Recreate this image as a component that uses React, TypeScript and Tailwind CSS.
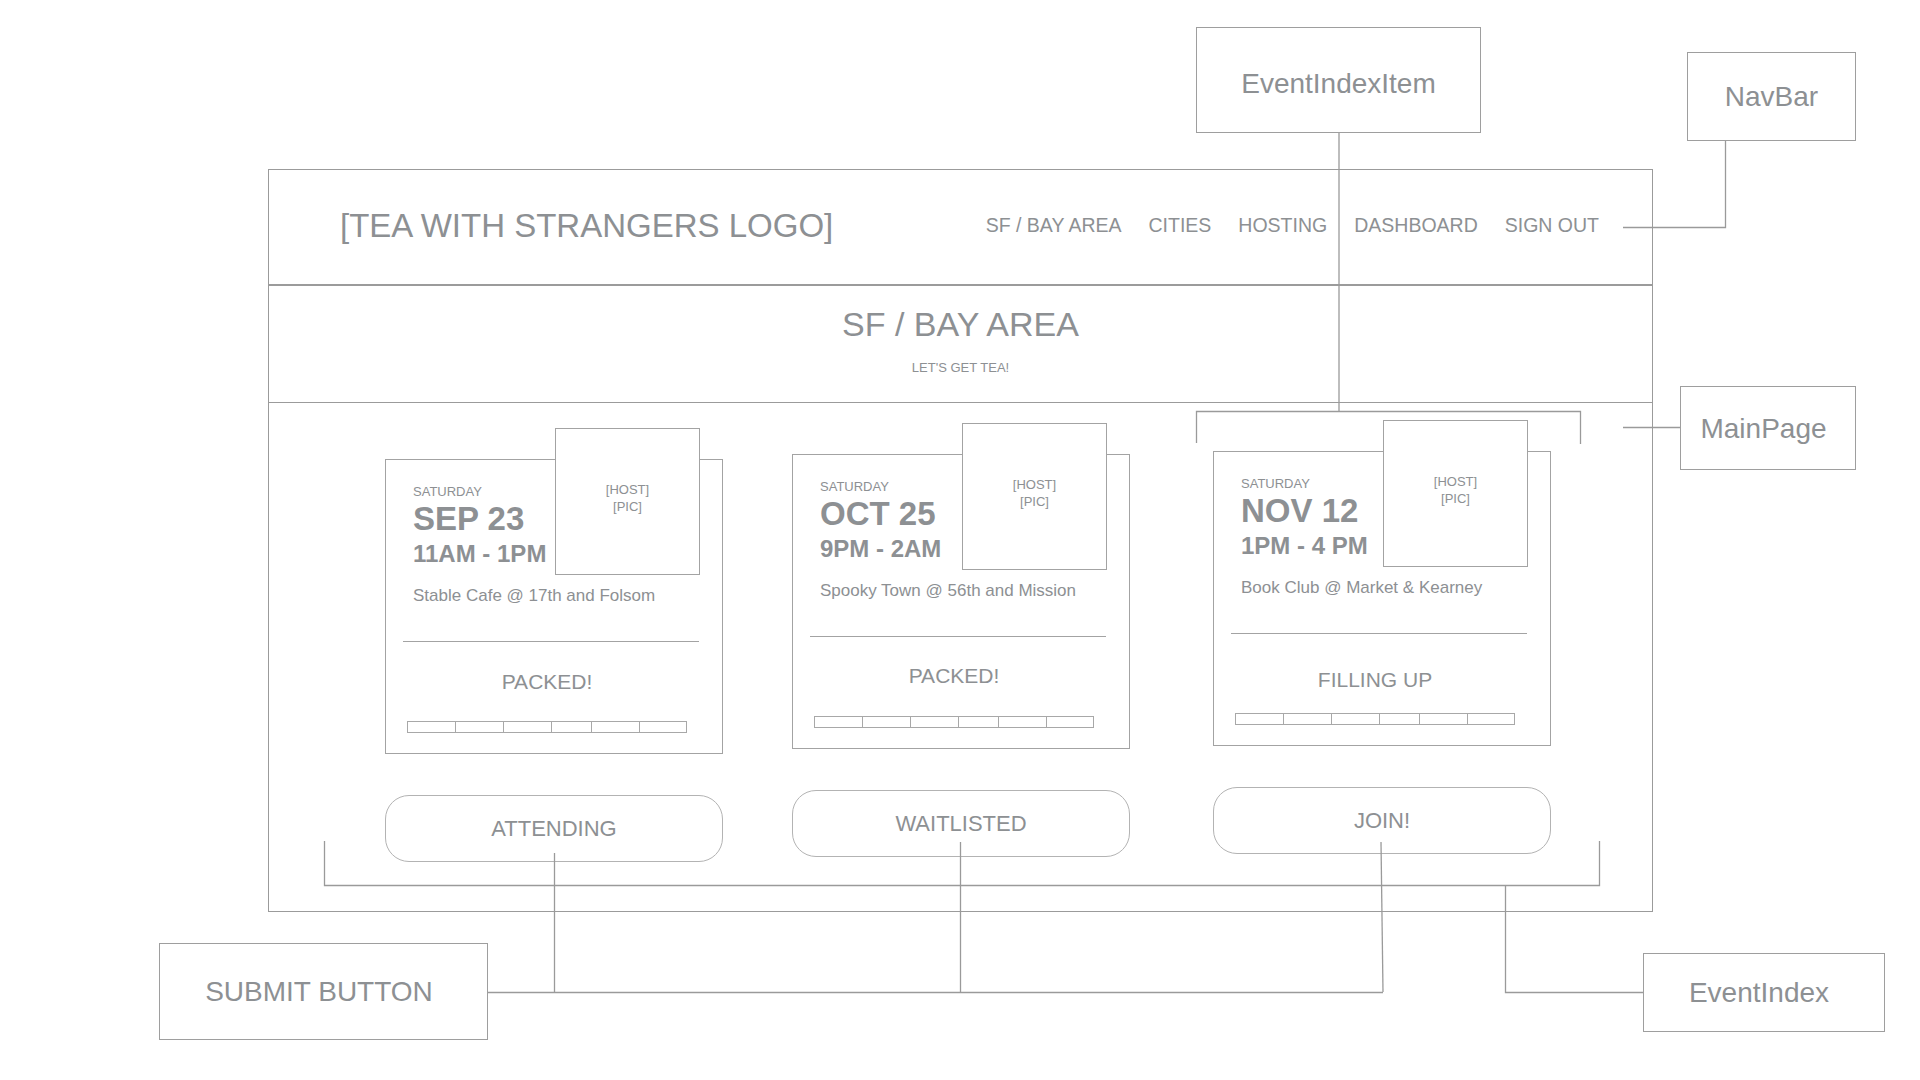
import React from "react";

type Ev = {
  date: string;
  time: string;
  place: string;
  status: string;
  button: string;
  col: string;
  statusMt: string;
  barMt: string;
};

const events: Ev[] = [
  {
    date: "SEP 23",
    time: "11AM - 1PM",
    place: "Stable Cafe @ 17th and Folsom",
    status: "PACKED!",
    button: "ATTENDING",
    col: "ml-[116px] mt-[56px]",
    statusMt: "mt-[29px]",
    barMt: "mt-[29px]",
  },
  {
    date: "OCT 25",
    time: "9PM - 2AM",
    place: "Spooky Town @ 56th and Mission",
    status: "PACKED!",
    button: "WAITLISTED",
    col: "ml-[69px] mt-[51px]",
    statusMt: "mt-[28px]",
    barMt: "mt-[30px]",
  },
  {
    date: "NOV 12",
    time: "1PM - 4 PM",
    place: "Book Club @ Market & Kearney",
    status: "FILLING UP",
    button: "JOIN!",
    col: "ml-[83px] mt-[48px]",
    statusMt: "mt-[35px]",
    barMt: "mt-[23px]",
  },
];

const segs = [48, 48, 48, 40, 48, 48];

function Card({ ev }: { ev: Ev }) {
  return (
    <div className={`flex flex-col w-[338px] ${ev.col}`}>
      <div className="relative h-[295px] w-[338px] border border-[#a3a3a3] bg-white">
        <div className="absolute left-[169px] top-[-32px] h-[147px] w-[145px] border border-[#a3a3a3] bg-white pt-[52px] text-center text-[13px] leading-[17px]">
          <div>[HOST]</div>
          <div>[PIC]</div>
        </div>
        <div className="pl-[27px] pt-[24px]">
          <div className="text-[13px] leading-[15px]">SATURDAY</div>
          <div className="mt-[3px] text-[33px] font-bold leading-none">{ev.date}</div>
          <div className="mt-[7px] text-[24px] font-bold leading-none">{ev.time}</div>
          <div className="mt-[21px] text-[17px] leading-none">{ev.place}</div>
        </div>
        <div className="ml-[17px] mt-[37px] h-px w-[296px] bg-[#a3a3a3]" />
        <div className={`${ev.statusMt} w-[322px] text-center text-[21px] leading-none`}>{ev.status}</div>
        <div className={`${ev.barMt} ml-[21px] flex h-[12px] w-[280px] border border-[#a8a8a8]`}>
          {segs.map((w, i) => (
            <div
              key={i}
              style={{ width: w }}
              className={i < segs.length - 1 ? "h-full border-r border-[#a8a8a8]" : "h-full flex-1"}
            />
          ))}
        </div>
      </div>
      <div className="mt-[41px] flex h-[67px] w-[338px] items-center justify-center rounded-[24px] border border-[#b3b3b3] text-[22px]">
        {ev.button}
      </div>
    </div>
  );
}

function Label({ cls, text }: { cls: string; text: string }) {
  return (
    <div
      className={`absolute flex items-center justify-center border border-[#9e9e9e] bg-white text-[28px] ${cls}`}
    >
      {text}
    </div>
  );
}

export default function App() {
  return (
    <div className="relative h-[1080px] w-[1920px] overflow-hidden bg-white font-['Liberation_Sans',Arial,sans-serif] text-[#8d9093]">
      {/* wireframe */}
      <div className="absolute left-[268px] top-[169px] flex h-[743px] w-[1385px] flex-col border border-[#9b9b9b]">
        <div className="flex h-[116px] shrink-0 items-center border-b-2 border-[#9b9b9b] pb-[3px]">
          <div className="pl-[71px] text-[33px] leading-none">[TEA WITH STRANGERS LOGO]</div>
          <nav className="ml-auto flex gap-[27px] pr-[53px] text-[19.5px] leading-none">
            <span>SF / BAY AREA</span>
            <span>CITIES</span>
            <span>HOSTING</span>
            <span>DASHBOARD</span>
            <span>SIGN OUT</span>
          </nav>
        </div>
        <div className="flex h-[117px] shrink-0 flex-col items-center border-b border-[#9b9b9b] pt-[21px]">
          <div className="text-[34px] leading-none">SF / BAY AREA</div>
          <div className="mt-[20px] text-[13px] leading-none">LET'S GET TEA!</div>
        </div>
        <div className="flex flex-1 items-start">
          {events.map((ev) => (
            <Card key={ev.date} ev={ev} />
          ))}
        </div>
      </div>

      {/* annotation labels */}
      <Label cls="left-[1196px] top-[27px] h-[106px] w-[285px] pt-[8px]" text="EventIndexItem" />
      <Label cls="left-[1687px] top-[52px] h-[89px] w-[169px]" text="NavBar" />
      <Label cls="left-[1680px] top-[386px] h-[84px] w-[176px] pr-[9px] pt-[2px]" text="MainPage" />
      <Label cls="left-[159px] top-[943px] h-[97px] w-[329px] pr-[9px]" text="SUBMIT BUTTON" />
      <Label cls="left-[1643px] top-[953px] h-[79px] w-[242px] pr-[10px]" text="EventIndex" />

      {/* connectors */}
      <svg
        className="pointer-events-none absolute left-0 top-0"
        width="1920"
        height="1080"
        viewBox="0 0 1920 1080"
        fill="none"
        stroke="#9a9a9a"
        strokeWidth="1.3"
      >
        <path d="M1339 133 V411" />
        <path d="M1196.5 443 V411.5 H1580.5 V444" />
        <path d="M1725.5 141 V227.5 H1623" />
        <path d="M1623 427.5 H1680" />
        <path d="M324.5 841 V885.5 H1599.5 V841" />
        <path d="M1505.5 885 V992.5 H1643" />
        <path d="M488 992.5 H1383" />
        <path d="M554.5 853 V992" />
        <path d="M960.5 842 V992" />
        <path d="M1381 842 L1383 992" />
      </svg>
    </div>
  );
}
